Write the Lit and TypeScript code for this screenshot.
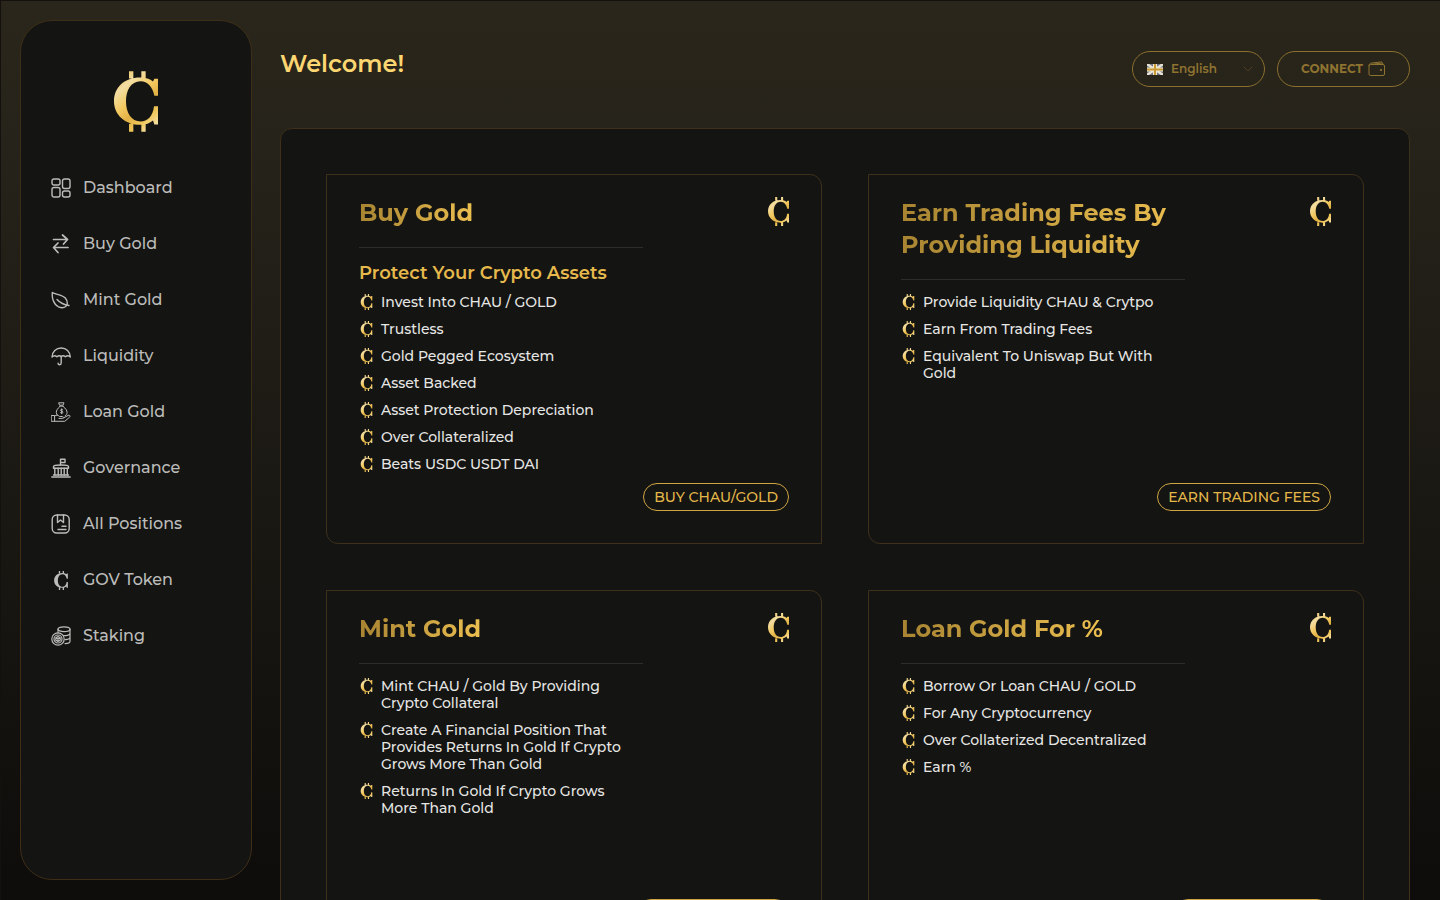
import { LitElement, html, svg, css, nothing } from "lit";
import { customElement, property } from "lit/decorators.js";

const navIcons: Record<string, unknown> = {
  dashboard: svg`
    <rect x="1" y="1" width="8" height="6" rx="2" />
    <rect x="11.5" y="1" width="7.5" height="9.5" rx="2" />
    <rect x="1" y="9.5" width="8" height="9.5" rx="2" />
    <rect x="11.5" y="13" width="7.5" height="6" rx="2" />`,
  swap: svg`
    <g stroke-width="1.7">
      <path d="M2.500 5.500H16.500M11.500 1 16.500 5.500l-4 4.500" />
      <path d="M17 13.500H2.500M7 9 2.500 13.500 7 18.500" />
    </g>`,
  leaf: svg`
    <path d="M1.300 2.500C4.500 4.800 10.500 4 14.300 8c1.800 2 2.300 4.500 1.700 7-1.500 2.500-5 3.200-8.500 1.800C2.500 14.500.8 8 1.300 2.500Z" />
    <path d="M6 9.500c3 3.200 7 5.300 12 6" />`,
  umbrella: svg`
    <path d="M1 11C1.300 5.800 5 2 10.200 2S19 5.800 19.300 11c-1.500-1.500-3.500-1.500-4.800-.3-1.200-1.100-3-1.300-4.300-.2-1.300-1.100-3-.9-4.300.2C4.500 9.500 2.500 9.500 1 11Z" />
    <path d="M10.200 10.500v6.200c0 2.600-3 2.600-3.100.6" />`,
  loan: svg`
    <g stroke-width="1">
      <path d="M8 .8h5l-1 2.400H9ZM8.800 4.200h3.500" />
      <path d="M8.800 4.500C6.500 6.500 5.300 8.500 5.300 10.500c0 1.200.5 2 1.200 2.700M12.300 4.500c2.300 2 3.800 4 3.800 6 0 1.600-.8 2.700-2 3.300" />
      <path d="M11.800 7.800c-.5-.6-2.300-.5-2.300.5 0 1.200 2.500.6 2.500 1.900 0 1-2 1.100-2.600.3M10.700 6.800v5" />
      <path d="M.6 13.500h3v5.800h-3ZM3.600 14c2-1.500 3.500-.8 5 .5h2.800c1.300 0 1.300 1.900 0 1.900H8M12.500 16l4.600-2.600c1.500-.7 2.600.6 1.500 1.700l-4.800 4.200H3.600" />
    </g>`,
  governance: svg`
    <path d="M.8 19h18.400M2.500 17h15M2.500 10.200V8.500c0-.9 4-1.500 7.500-1.500s7.500.6 7.500 1.500v1.700H2.500Z" />
    <path d="M3.800 10.200V17M7.200 10.200V17M10.200 10.200V17M13.200 10.200V17M16.300 10.200V17M9.500 7V1.200H14v3.300H9.500" />`,
  positions: svg`
    <rect x="1.200" y="1" width="17" height="18" rx="4.500" />
    <path d="M6.500 1v7.500l3-2.500 3 2.500V1M11 12.200h4M7 15.500h8" />`,
  staking: svg`
    <g stroke-width="1.200">
      <ellipse cx="13" cy="3.200" rx="6" ry="2.400" />
      <path d="M7 3.200v3.500M19 3.200v12c0 1.300-2.400 2.300-5 2.400M19 7.200c0 1.600-3 2.600-6.500 2.400M19 11.200c0 1.300-2 2.200-4.800 2.400" />
      <circle cx="7" cy="13" r="6.200" />
      <circle cx="7" cy="13" r="4" />
      <path d="m7 10.600 2.200 1.200v2.400L7 15.400l-2.200-1.200v-2.400ZM4.800 11.800 7 13l2.200-1.200M7 13v2.400" />
    </g>`,
};

const navItems = [
  { label: "Dashboard", icon: "dashboard" },
  { label: "Buy Gold", icon: "swap" },
  { label: "Mint Gold", icon: "leaf" },
  { label: "Liquidity", icon: "umbrella" },
  { label: "Loan Gold", icon: "loan" },
  { label: "Governance", icon: "governance" },
  { label: "All Positions", icon: "positions" },
  { label: "GOV Token", icon: "coin" },
  { label: "Staking", icon: "staking" },
];

interface Offer {
  title: string;
  subtitle?: string;
  points: string[];
  action: string;
}

const offers: Offer[] = [
  {
    title: "Buy Gold",
    subtitle: "Protect Your Crypto Assets",
    points: [
      "Invest Into CHAU / GOLD",
      "Trustless",
      "Gold Pegged Ecosystem",
      "Asset Backed",
      "Asset Protection Depreciation",
      "Over Collateralized",
      "Beats USDC USDT DAI",
    ],
    action: "BUY CHAU/GOLD",
  },
  {
    title: "Earn Trading Fees By Providing Liquidity",
    points: [
      "Provide Liquidity CHAU & Crytpo",
      "Earn From Trading Fees",
      "Equivalent To Uniswap But With Gold",
    ],
    action: "EARN TRADING FEES",
  },
  {
    title: "Mint Gold",
    points: [
      "Mint CHAU / Gold By Providing Crypto Collateral",
      "Create A Financial Position That Provides Returns In Gold If Crypto Grows More Than Gold",
      "Returns In Gold If Crypto Grows More Than Gold",
    ],
    action: "MINT CHAU/GOLD",
  },
  {
    title: "Loan Gold For %",
    points: [
      "Borrow Or Loan CHAU / GOLD",
      "For Any Cryptocurrency",
      "Over Collaterized Decentralized",
      "Earn %",
    ],
    action: "LOAN CHAU/GOLD",
  },
];

@customElement("coin-mark")
class CoinMark extends LitElement {
  @property({ type: Boolean }) plain = false;

  static styles = css`
    :host {
      display: block;
      flex: none;
    }
    svg {
      display: block;
      width: 100%;
      height: 100%;
    }
  `;

  render() {
    return html`<svg viewBox="0 0 132 182" aria-hidden="true">
      <defs>
        <linearGradient id="gold" gradientUnits="userSpaceOnUse" x1="0" y1="20" x2="132" y2="170">
          <stop offset="0" stop-color="#ecc055" />
          <stop offset="0.2" stop-color="#f3dda2" />
          <stop offset="0.42" stop-color="#f3ca62" />
          <stop offset="0.6" stop-color="#e2b145" />
          <stop offset="0.78" stop-color="#f0c658" />
          <stop offset="1" stop-color="#f6e8bd" />
        </linearGradient>
      </defs>
      <path
        fill=${this.plain ? "currentColor" : "url(#gold)"}
        d="M45 0h13v22H45ZM82 0h13v22H82ZM45 158h13v24H45ZM82 158h13v24H82ZM132 23V74H121C117 48 100 30 80 30 50 30 36 58 36 91s16 60 44 60c20 0 37-16 40-46h12v55H121l-4-12c-10 8-21 13-37 13C32 161 0 130 0 90 0 48 32 19 78 19c17 0 30 4 39 12l4-8Z"
      />
    </svg>`;
  }
}

@customElement("offer-card")
class OfferCard extends LitElement {
  @property({ attribute: false }) offer!: Offer;

  static styles = css`
    :host {
      display: flex;
      flex-direction: column;
      justify-content: space-between;
      min-height: 370px;
      box-sizing: border-box;
      padding: 22px 32px 32px;
      border: 1px solid #3e301a;
      border-radius: 0 12px 0 12px;
    }
    .top {
      display: flex;
      justify-content: space-between;
      align-items: flex-start;
    }
    .copy {
      width: 66%;
    }
    .head {
      padding-bottom: 18px;
      border-bottom: 1px solid #2d2d2b;
      margin-bottom: 14px;
    }
    h2 {
      width: fit-content;
      margin: 0;
      font-size: 24px;
      line-height: 32px;
      font-weight: 700;
      color: transparent;
      background: linear-gradient(90deg, #a88432, #ecbf50);
      background-clip: text;
      -webkit-background-clip: text;
    }
    h3 {
      margin: 0 0 10px;
      font-size: 18px;
      line-height: 22px;
      font-weight: 600;
      color: #e6b94c;
    }
    ul {
      display: flex;
      flex-direction: column;
      gap: 10px;
      margin: 0;
      padding: 0;
      list-style: none;
    }
    li {
      display: flex;
      gap: 8px;
      font-size: 14px;
      line-height: 17px;
      font-weight: 500;
      color: #e6e6e4;
    }
    .bullet {
      width: 13px;
      height: 16px;
      margin-left: 1px;
    }
    .badge {
      width: 21px;
      height: 29px;
    }
    button {
      align-self: flex-end;
      height: 28px;
      padding: 0 10px;
      border: 1px solid #cfa544;
      border-radius: 14px;
      background: none;
      font: 500 14px/17px Montserrat, Inter, sans-serif;
      color: #e3b749;
      cursor: pointer;
    }
  `;

  render() {
    const { title, subtitle, points, action } = this.offer;
    return html`
      <div class="top">
        <div class="copy">
          <div class="head"><h2>${title}</h2></div>
          ${subtitle ? html`<h3>${subtitle}</h3>` : nothing}
          <ul>
            ${points.map(
              (p) => html`<li><coin-mark class="bullet"></coin-mark><span>${p}</span></li>`
            )}
          </ul>
        </div>
        <coin-mark class="badge"></coin-mark>
      </div>
      <button type="button">${action}</button>
    `;
  }
}

@customElement("app-root")
class AppRoot extends LitElement {
  static styles = css`
    :host {
      display: grid;
      grid-template-columns: 232px minmax(0, 1fr);
      gap: 28px;
      height: 100vh;
      box-sizing: border-box;
      padding: 0 30px 0 19px;
      overflow: hidden;
      border-top: 1px solid #12110e;
      border-left: 1px solid #12110e;
      background: linear-gradient(180deg, #2a261b 0%, #26231a 15%, #0e0d0b 97%);
      font-family: Montserrat, Inter, sans-serif;
    }
    .sidebar {
      box-sizing: border-box;
      margin: 19px 0 20px;
      padding: 50px 30px;
      border: 1px solid #3e2e17;
      border-radius: 32px;
      background: #141412;
    }
    .logo {
      width: 44px;
      height: 61px;
      margin: 0 auto 38px;
    }
    nav {
      display: flex;
      flex-direction: column;
      gap: 20px;
    }
    nav a {
      display: flex;
      align-items: center;
      gap: 12px;
      height: 36px;
      font-size: 16px;
      line-height: 20px;
      font-weight: 500;
      color: #bcbcba;
      text-decoration: none;
    }
    .icon {
      width: 20px;
      height: 20px;
      flex: none;
      fill: none;
      stroke: currentColor;
      stroke-width: 1.4;
      stroke-linecap: round;
      stroke-linejoin: round;
    }
    .token {
      width: 14px;
      height: 19px;
      margin: 0 3px;
    }
    main {
      overflow-y: auto;
      scrollbar-width: none;
    }
    header {
      display: flex;
      justify-content: space-between;
      align-items: flex-start;
      padding: 50px 0 41px;
    }
    h1 {
      margin: 0;
      font-size: 24px;
      line-height: 26px;
      font-weight: 600;
      color: #fbd671;
    }
    .actions {
      display: flex;
      gap: 12px;
    }
    .pill {
      display: flex;
      align-items: center;
      box-sizing: border-box;
      width: 133px;
      height: 36px;
      border: 1px solid #8b6f2e;
      border-radius: 18px;
      background: none;
      color: #8f7330;
      font: 700 12px/16px Montserrat, Inter, sans-serif;
    }
    .lang {
      gap: 8px;
      padding: 0 11px 0 14px;
    }
    .flag {
      width: 16px;
      height: 11px;
      flex: none;
    }
    select {
      flex: 1;
      min-width: 0;
      padding: 0;
      border: 0;
      appearance: none;
      background: transparent;
      color: inherit;
      font: inherit;
      font-weight: 600;
    }
    .chevron {
      width: 10px;
      height: 6px;
      fill: none;
      stroke: #4d3a20;
    }
    .connect {
      justify-content: center;
      gap: 5px;
      padding: 0;
      cursor: pointer;
    }
    .wallet {
      width: 18px;
      height: 16px;
      fill: none;
      stroke: currentColor;
    }
    .panel {
      display: grid;
      grid-template-columns: repeat(2, minmax(0, 1fr));
      gap: 46px;
      padding: 45px;
      border: 1px solid #3e301a;
      border-radius: 12px;
      background: #141412;
    }
  `;

  render() {
    return html`
      <aside class="sidebar">
        <coin-mark class="logo"></coin-mark>
        <nav>
          ${navItems.map(
            ({ label, icon }) => html`<a href="#">
              ${icon === "coin"
                ? html`<coin-mark class="token" plain></coin-mark>`
                : html`<svg class="icon" viewBox="0 0 20 20" aria-hidden="true">${navIcons[icon]}</svg>`}
              ${label}
            </a>`
          )}
        </nav>
      </aside>
      <main>
        <header>
          <h1>Welcome!</h1>
          <div class="actions">
            <label class="pill lang">
              <svg class="flag" viewBox="0 0 16 11" role="img" aria-label="Language">
                <rect width="16" height="11" fill="#6f7484" />
                <path d="M0 0l16 11M16 0L0 11" stroke="#e9e4d6" stroke-width="2.4" />
                <path d="M8 0v11M0 5.500h16" stroke="#efe6cc" stroke-width="4" />
                <path d="M8 0v11M0 5.500h16" stroke="#c99a36" stroke-width="2" />
              </svg>
              <select>
                <option>English</option>
              </select>
              <svg class="chevron" viewBox="0 0 10 6" aria-hidden="true"><path d="M.5.5 5 5 9.500.5" /></svg>
            </label>
            <button class="pill connect" type="button">
              CONNECT
              <svg class="wallet" viewBox="0 0 18 16" aria-hidden="true">
                <rect x="1" y="3.500" width="15.500" height="11" rx="1.500" />
                <path d="M1 5C1 3 2 2.200 4 2L12.500 1c1.500-.2 2.200.5 2.200 2v.5M3 3.500 14 2" />
                <circle cx="13" cy="9" r=".7" fill="currentColor" />
              </svg>
            </button>
          </div>
        </header>
        <section class="panel">
          ${offers.map((o) => html`<offer-card .offer=${o}></offer-card>`)}
        </section>
      </main>
    `;
  }
}
